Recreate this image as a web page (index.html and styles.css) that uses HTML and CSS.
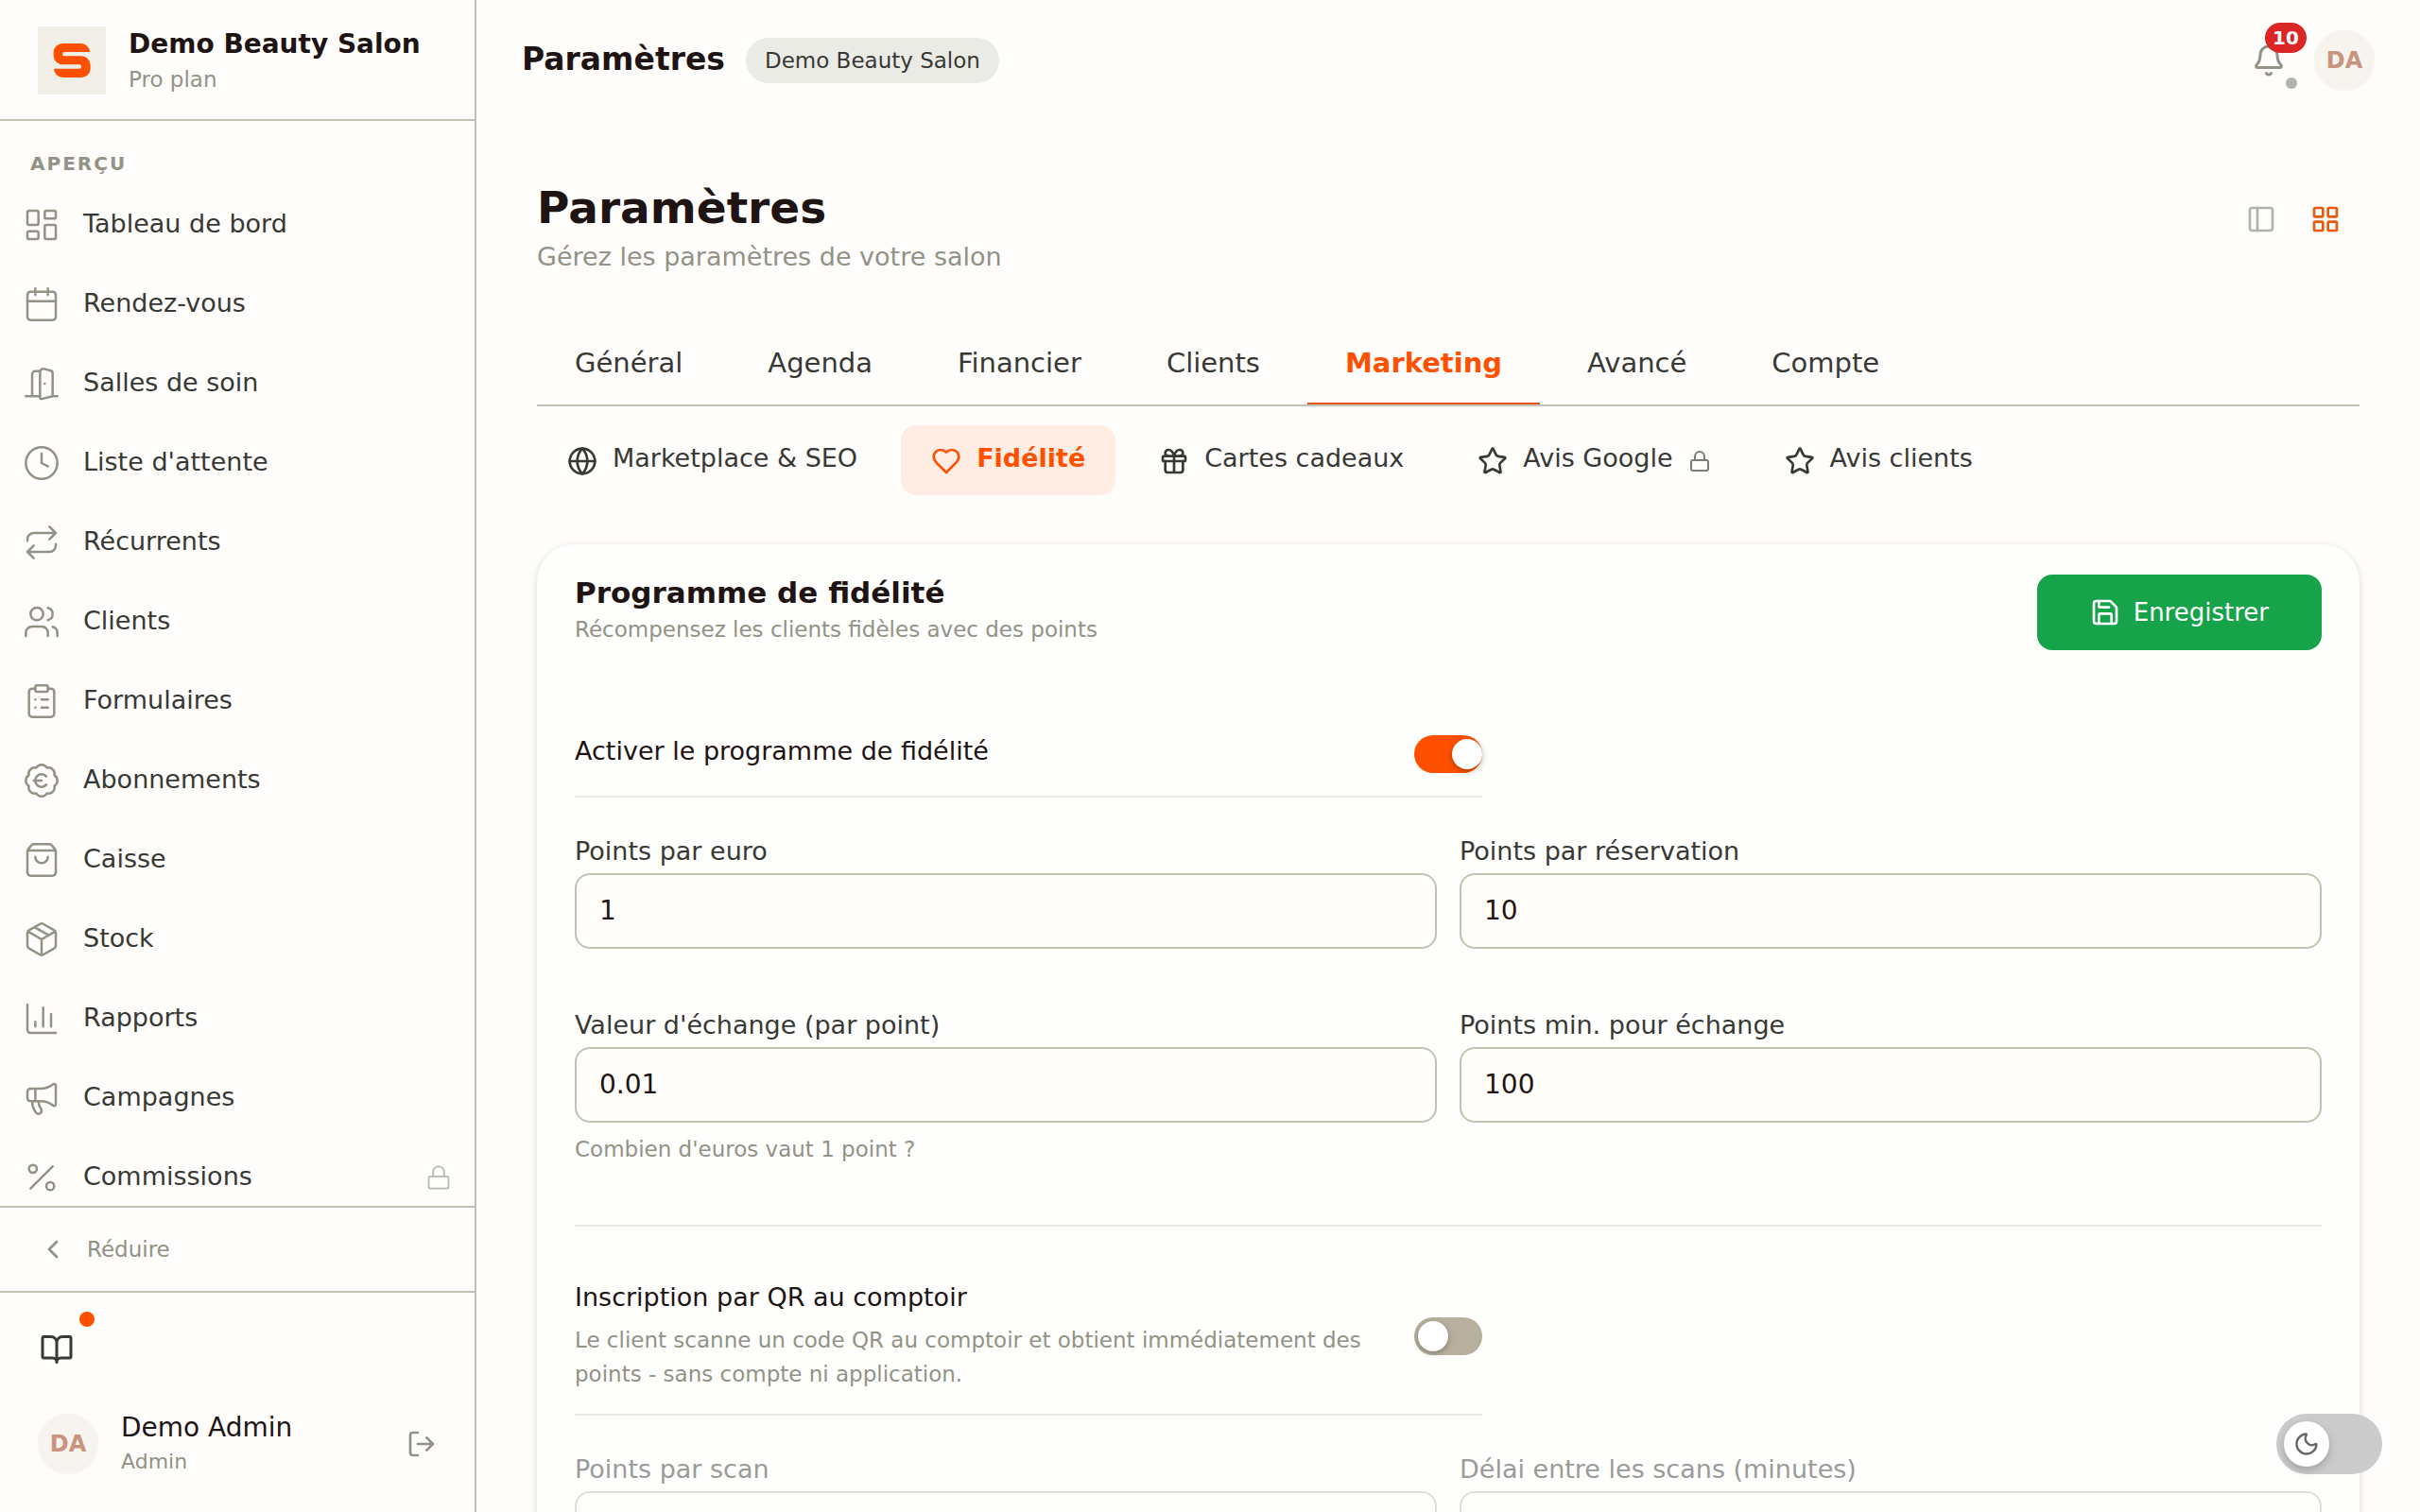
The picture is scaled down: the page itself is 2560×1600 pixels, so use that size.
FILE: index.html
```html
<!DOCTYPE html>
<html lang="fr">
<head>
    <meta charset="UTF-8">
    <meta name="viewport" content="width=device-width, initial-scale=1.0">
    <title>Paramètres - Demo Beauty Salon</title>
    <link rel="stylesheet" href="styles.css">
</head>
<body>
    <!-- Icon sprite -->
    <svg class="sprite" aria-hidden="true">
        <symbol id="i-dashboard" viewBox="0 0 24 24"><rect width="7" height="9" x="3" y="3" rx="1"/><rect width="7" height="5" x="14" y="3" rx="1"/><rect width="7" height="9" x="14" y="12" rx="1"/><rect width="7" height="5" x="3" y="16" rx="1"/></symbol>
        <symbol id="i-calendar" viewBox="0 0 24 24"><path d="M8 2v4M16 2v4M3 10h18"/><rect width="18" height="18" x="3" y="4" rx="2"/></symbol>
        <symbol id="i-door" viewBox="0 0 24 24"><path d="M11 20H2M11 4.562v16.157a1 1 0 0 0 1.242.97L19 20V5.562a2 2 0 0 0-1.515-1.94l-4-1A2 2 0 0 0 11 4.561zM11 4H8a2 2 0 0 0-2 2v14M14 12h.01M22 20h-3"/></symbol>
        <symbol id="i-clock" viewBox="0 0 24 24"><circle cx="12" cy="12" r="10"/><path d="M12 6v6l4 2"/></symbol>
        <symbol id="i-repeat" viewBox="0 0 24 24"><path d="m17 2 4 4-4 4M3 11v-1a4 4 0 0 1 4-4h14M7 22l-4-4 4-4M21 13v1a4 4 0 0 1-4 4H3"/></symbol>
        <symbol id="i-users" viewBox="0 0 24 24"><path d="M16 21v-2a4 4 0 0 0-4-4H6a4 4 0 0 0-4 4v2M16 3.128a4 4 0 0 1 0 7.744M22 21v-2a4 4 0 0 0-3-3.87"/><circle cx="9" cy="7" r="4"/></symbol>
        <symbol id="i-clipboard" viewBox="0 0 24 24"><rect width="8" height="4" x="8" y="2" rx="1"/><path d="M16 4h2a2 2 0 0 1 2 2v14a2 2 0 0 1-2 2H6a2 2 0 0 1-2-2V6a2 2 0 0 1 2-2h2M12 11h4M12 16h4M8 11h.01M8 16h.01"/></symbol>
        <symbol id="i-badge-euro" viewBox="0 0 24 24"><path d="M3.85 8.62a4 4 0 0 1 4.78-4.77 4 4 0 0 1 6.74 0 4 4 0 0 1 4.78 4.78 4 4 0 0 1 0 6.74 4 4 0 0 1-4.77 4.78 4 4 0 0 1-6.75 0 4 4 0 0 1-4.78-4.77 4 4 0 0 1 0-6.76ZM7 12h5M15 9.4a4 4 0 1 0 0 5.2"/></symbol>
        <symbol id="i-bag" viewBox="0 0 24 24"><path d="M16 10a4 4 0 0 1-8 0M3.103 6.034h17.794M3.4 5.467a2 2 0 0 0-.4 1.2V20a2 2 0 0 0 2 2h14a2 2 0 0 0 2-2V6.667a2 2 0 0 0-.4-1.2l-2-2.667A2 2 0 0 0 17 2H7a2 2 0 0 0-1.6.8z"/></symbol>
        <symbol id="i-package" viewBox="0 0 24 24"><path d="M11 21.73a2 2 0 0 0 2 0l7-4A2 2 0 0 0 21 16V8a2 2 0 0 0-1-1.73l-7-4a2 2 0 0 0-2 0l-7 4A2 2 0 0 0 3 8v8a2 2 0 0 0 1 1.73zM12 22V12M3.29 7 12 12l8.71-5M7.5 4.27l9 5.15"/></symbol>
        <symbol id="i-chart" viewBox="0 0 24 24"><path d="M3 3v16a2 2 0 0 0 2 2h16M18 17V9M13 17V5M8 17v-3"/></symbol>
        <symbol id="i-megaphone" viewBox="0 0 24 24"><path d="M11 6a13 13 0 0 0 8.4-2.8A1 1 0 0 1 21 4v12a1 1 0 0 1-1.6.8A13 13 0 0 0 11 14H5a2 2 0 0 1-2-2V8a2 2 0 0 1 2-2zM6 14a12 12 0 0 0 2.4 7.2 2 2 0 0 0 3.2-2.4A8 8 0 0 1 10 14M8 6v8"/></symbol>
        <symbol id="i-percent" viewBox="0 0 24 24"><path d="M19 5 5 19"/><circle cx="6.5" cy="6.5" r="2.5"/><circle cx="17.5" cy="17.5" r="2.5"/></symbol>
        <symbol id="i-lock" viewBox="0 0 24 24"><rect width="18" height="11" x="3" y="11" rx="2"/><path d="M7 11V7a5 5 0 0 1 10 0v4"/></symbol>
        <symbol id="i-chevron-left" viewBox="0 0 24 24"><path d="m15 18-6-6 6-6"/></symbol>
        <symbol id="i-book" viewBox="0 0 24 24"><path d="M12 7v14M3 18a1 1 0 0 1-1-1V4a1 1 0 0 1 1-1h5a4 4 0 0 1 4 4 4 4 0 0 1 4-4h5a1 1 0 0 1 1 1v13a1 1 0 0 1-1 1h-6a3 3 0 0 0-3 3 3 3 0 0 0-3-3z"/></symbol>
        <symbol id="i-logout" viewBox="0 0 24 24"><path d="m16 17 5-5-5-5M21 12H9M9 21H5a2 2 0 0 1-2-2V5a2 2 0 0 1 2-2h4"/></symbol>
        <symbol id="i-bell" viewBox="0 0 24 24"><path d="M10.268 21a2 2 0 0 0 3.464 0M3.262 15.326A1 1 0 0 0 4 17h16a1 1 0 0 0 .74-1.673C19.41 13.956 18 12.499 18 8A6 6 0 0 0 6 8c0 4.499-1.411 5.956-2.738 7.326"/></symbol>
        <symbol id="i-panel" viewBox="0 0 24 24"><rect width="18" height="18" x="3" y="3" rx="2"/><path d="M9 3v18"/></symbol>
        <symbol id="i-grid" viewBox="0 0 24 24"><rect width="7" height="7" x="3" y="3" rx="1"/><rect width="7" height="7" x="14" y="3" rx="1"/><rect width="7" height="7" x="14" y="14" rx="1"/><rect width="7" height="7" x="3" y="14" rx="1"/></symbol>
        <symbol id="i-globe" viewBox="0 0 24 24"><circle cx="12" cy="12" r="10"/><path d="M12 2a14.5 14.5 0 0 0 0 20 14.5 14.5 0 0 0 0-20M2 12h20"/></symbol>
        <symbol id="i-heart" viewBox="0 0 24 24"><path d="M19 14c1.49-1.46 3-3.21 3-5.5A5.5 5.5 0 0 0 16.5 3c-1.76 0-3 .5-4.5 2-1.5-1.5-2.74-2-4.5-2A5.5 5.5 0 0 0 2 8.5c0 2.3 1.5 4.05 3 5.5l7 7Z"/></symbol>
        <symbol id="i-gift" viewBox="0 0 24 24"><rect x="3" y="8" width="18" height="4" rx="1"/><path d="M12 8v13M19 12v7a2 2 0 0 1-2 2H7a2 2 0 0 1-2-2v-7M7.5 8a2.5 2.5 0 0 1 0-5A4.8 8 0 0 1 12 8a4.8 8 0 0 1 4.5-5 2.5 2.5 0 0 1 0 5"/></symbol>
        <symbol id="i-star" viewBox="0 0 24 24"><path d="M11.525 2.295a.53.53 0 0 1 .95 0l2.31 4.679a2.123 2.123 0 0 0 1.595 1.16l5.166.756a.53.53 0 0 1 .294.904l-3.736 3.638a2.123 2.123 0 0 0-.611 1.878l.882 5.14a.53.53 0 0 1-.771.56l-4.618-2.428a2.122 2.122 0 0 0-1.973 0L6.396 21.01a.53.53 0 0 1-.77-.56l.881-5.139a2.122 2.122 0 0 0-.611-1.879L2.16 9.795a.53.53 0 0 1 .294-.906l5.165-.755a2.122 2.122 0 0 0 1.597-1.16z"/></symbol>
        <symbol id="i-save" viewBox="0 0 24 24"><path d="M15.2 3a2 2 0 0 1 1.4.6l3.8 3.8a2 2 0 0 1 .6 1.4V19a2 2 0 0 1-2 2H5a2 2 0 0 1-2-2V5a2 2 0 0 1 2-2zM17 21v-7a1 1 0 0 0-1-1H8a1 1 0 0 0-1 1v7M7 3v4a1 1 0 0 0 1 1h7"/></symbol>
        <symbol id="i-moon" viewBox="0 0 24 24"><path d="M20.985 12.486a9 9 0 1 1-9.473-9.472c.405-.022.617.46.402.803a6 6 0 0 0 8.268 8.268c.344-.215.825-.004.803.401"/></symbol>
    </svg>

    <div class="app">
        <aside class="sidebar">
            <div class="brand">
                <svg class="brand-logo" viewBox="0 0 216 216" aria-hidden="true"><path d="M165 81H85a6.5 6.5 0 0 0 0 13H138a29 29 0 0 1 29 29V133a29 29 0 0 1-29 29H80a29 28 0 0 1-29-28H132a6 6 0 0 0 6-6 6 7 0 0 0-6-7H79a29 28 0 0 1-29-28V82a29 28 0 0 1 29-28H137a28 27 0 0 1 28 27z"/></svg>
                <div class="brand-text">
                    <div class="brand-name">Demo Beauty Salon</div>
                    <div class="brand-plan">Pro plan</div>
                </div>
            </div>

            <nav class="nav">
                <div class="nav-label">APERÇU</div>
                <a class="nav-item" href="#"><svg class="icon nav-icon"><use href="#i-dashboard"/></svg>Tableau de bord</a>
                <a class="nav-item" href="#"><svg class="icon nav-icon"><use href="#i-calendar"/></svg>Rendez-vous</a>
                <a class="nav-item" href="#"><svg class="icon nav-icon"><use href="#i-door"/></svg>Salles de soin</a>
                <a class="nav-item" href="#"><svg class="icon nav-icon"><use href="#i-clock"/></svg>Liste d'attente</a>
                <a class="nav-item" href="#"><svg class="icon nav-icon"><use href="#i-repeat"/></svg>Récurrents</a>
                <a class="nav-item" href="#"><svg class="icon nav-icon"><use href="#i-users"/></svg>Clients</a>
                <a class="nav-item" href="#"><svg class="icon nav-icon"><use href="#i-clipboard"/></svg>Formulaires</a>
                <a class="nav-item" href="#"><svg class="icon nav-icon"><use href="#i-badge-euro"/></svg>Abonnements</a>
                <a class="nav-item" href="#"><svg class="icon nav-icon"><use href="#i-bag"/></svg>Caisse</a>
                <a class="nav-item" href="#"><svg class="icon nav-icon"><use href="#i-package"/></svg>Stock</a>
                <a class="nav-item" href="#"><svg class="icon nav-icon"><use href="#i-chart"/></svg>Rapports</a>
                <a class="nav-item" href="#"><svg class="icon nav-icon"><use href="#i-megaphone"/></svg>Campagnes</a>
                <a class="nav-item" href="#"><svg class="icon nav-icon"><use href="#i-percent"/></svg>Commissions<svg class="icon nav-lock"><use href="#i-lock"/></svg></a>
            </nav>

            <button class="collapse" type="button"><svg class="icon icon-md"><use href="#i-chevron-left"/></svg>Réduire</button>

            <div class="sidebar-footer">
                <button class="guide-button" type="button" aria-label="Guide"><svg class="icon icon-lg"><use href="#i-book"/></svg><span class="guide-dot"></span></button>
                <div class="user">
                    <div class="avatar">DA</div>
                    <div class="user-text">
                        <div class="user-name">Demo Admin</div>
                        <div class="user-role">Admin</div>
                    </div>
                    <button class="logout" type="button" aria-label="Se déconnecter"><svg class="icon icon-md"><use href="#i-logout"/></svg></button>
                </div>
            </div>
        </aside>

        <main class="main">
            <header class="topbar">
                <div class="topbar-title">Paramètres</div>
                <span class="salon-pill">Demo Beauty Salon</span>
                <div class="topbar-actions">
                    <button class="bell" type="button" aria-label="Notifications">
                        <svg class="icon icon-lg"><use href="#i-bell"/></svg>
                        <span class="bell-badge">10</span>
                        <span class="bell-status"></span>
                    </button>
                    <div class="avatar">DA</div>
                </div>
            </header>

            <div class="content">
                <div class="page-head">
                    <div>
                        <h1>Paramètres</h1>
                        <p class="page-subtitle">Gérez les paramètres de votre salon</p>
                    </div>
                    <div class="view-toggle">
                        <button class="view-button" type="button" aria-label="Vue latérale"><svg class="icon icon-md"><use href="#i-panel"/></svg></button>
                        <button class="view-button active" type="button" aria-label="Vue grille"><svg class="icon icon-md"><use href="#i-grid"/></svg></button>
                    </div>
                </div>

                <nav class="tabs">
                    <a class="tab" href="#">Général</a>
                    <a class="tab" href="#">Agenda</a>
                    <a class="tab" href="#">Financier</a>
                    <a class="tab" href="#">Clients</a>
                    <a class="tab active" href="#">Marketing</a>
                    <a class="tab" href="#">Avancé</a>
                    <a class="tab" href="#">Compte</a>
                </nav>

                <nav class="subtabs">
                    <a class="subtab" href="#"><svg class="icon icon-md"><use href="#i-globe"/></svg><span>Marketplace &amp; SEO</span></a>
                    <a class="subtab active" href="#"><svg class="icon icon-md"><use href="#i-heart"/></svg><span>Fidélité</span></a>
                    <a class="subtab" href="#"><svg class="icon icon-md"><use href="#i-gift"/></svg><span>Cartes cadeaux</span></a>
                    <a class="subtab" href="#"><svg class="icon icon-md"><use href="#i-star"/></svg><span>Avis Google</span><svg class="icon subtab-lock"><use href="#i-lock"/></svg></a>
                    <a class="subtab" href="#"><svg class="icon icon-md"><use href="#i-star"/></svg><span>Avis clients</span></a>
                </nav>

                <section class="card">
                    <div class="card-head">
                        <div>
                            <h2>Programme de fidélité</h2>
                            <p class="card-subtitle">Récompensez les clients fidèles avec des points</p>
                        </div>
                        <button class="save-button" type="button"><svg class="icon icon-md"><use href="#i-save"/></svg>Enregistrer</button>
                    </div>

                    <div class="switch-row">
                        <label class="switch-text" for="loyalty-enabled"><span class="switch-title">Activer le programme de fidélité</span></label>
                        <input class="switch" type="checkbox" id="loyalty-enabled" checked>
                    </div>

                    <div class="fields">
                        <div class="field">
                            <label for="points-euro">Points par euro</label>
                            <input type="number" id="points-euro" value="1">
                        </div>
                        <div class="field">
                            <label for="points-booking">Points par réservation</label>
                            <input type="number" id="points-booking" value="10">
                        </div>
                        <div class="field">
                            <label for="point-value">Valeur d'échange (par point)</label>
                            <input type="number" id="point-value" step="0.01" value="0.01">
                            <p class="hint">Combien d'euros vaut 1 point ?</p>
                        </div>
                        <div class="field">
                            <label for="points-min">Points min. pour échange</label>
                            <input type="number" id="points-min" value="100">
                        </div>
                    </div>

                    <hr class="divider">

                    <div class="switch-row">
                        <label class="switch-text" for="qr-enabled">
                            <span class="switch-title">Inscription par QR au comptoir</span>
                            <span class="switch-desc">Le client scanne un code QR au comptoir et obtient immédiatement des points - sans compte ni application.</span>
                        </label>
                        <input class="switch" type="checkbox" id="qr-enabled">
                    </div>

                    <div class="fields disabled">
                        <div class="field">
                            <label for="points-scan">Points par scan</label>
                            <input type="number" id="points-scan" value="10" disabled>
                        </div>
                        <div class="field">
                            <label for="scan-delay">Délai entre les scans (minutes)</label>
                            <input type="number" id="scan-delay" value="60" disabled>
                        </div>
                    </div>
                </section>
            </div>
        </main>
    </div>

    <button class="theme-toggle" type="button" aria-label="Mode sombre"><span class="theme-knob"><svg class="icon"><use href="#i-moon"/></svg></span></button>
</body>
</html>
```
FILE: styles.css
```css
:root {
    --bg: #fefdfb;
    --border: #c2c2b2;
    --line: #e8e8e4;
    --ink: #1f1414;
    --text: #383835;
    --muted: #929286;
    --accent: #ff5000;
}

* {
    box-sizing: border-box;
}

body {
    margin: 0;
    background: var(--bg);
    color: var(--text);
    font-family: "DejaVu Sans", sans-serif;
    font-size: 27px;
}

h1,
h2,
p {
    margin: 0;
}

a {
    color: inherit;
    text-decoration: none;
}

button {
    padding: 0;
    border: none;
    background: none;
    color: inherit;
    font-family: inherit;
    font-size: 27px;
    cursor: pointer;
}

/* Icons */
.sprite {
    display: none;
}

.icon {
    flex: none;
    fill: none;
    stroke: currentColor;
    stroke-width: 2;
    stroke-linecap: round;
    stroke-linejoin: round;
}

.icon-md {
    width: 32px;
    height: 32px;
}

.icon-lg {
    width: 36px;
    height: 36px;
}

.app {
    display: flex;
    height: 100vh;
}

/* Sidebar */
.sidebar {
    display: flex;
    flex-direction: column;
    flex: none;
    width: 504px;
    border-right: 2px solid var(--border);
}

.brand {
    display: flex;
    align-items: center;
    gap: 24px;
    height: 128px;
    padding: 2px 40px 0;
    border-bottom: 2px solid var(--border);
}

.brand-logo {
    width: 72px;
    height: 72px;
    background: #f0eee7;
    fill: var(--accent);
}

.brand-name {
    padding-top: 2px;
    color: var(--ink);
    font-size: 28px;
    font-weight: bold;
    line-height: 38px;
    white-space: nowrap;
}

.brand-plan {
    color: var(--muted);
    font-size: 23px;
    line-height: 36px;
}

.nav {
    flex: 1;
    min-height: 0;
    padding: 24px 0;
    overflow-y: auto;
    scrollbar-width: none;
}

.nav-label {
    margin-bottom: 2px;
    padding: 0 32px;
    color: var(--muted);
    font-size: 20px;
    font-weight: bold;
    letter-spacing: 2px;
    line-height: 42px;
}

.nav-item {
    display: flex;
    align-items: center;
    gap: 24px;
    height: 80px;
    margin-bottom: 4px;
    padding: 0 24px;
}

.nav-icon {
    width: 40px;
    height: 40px;
    margin-top: 4px;
    color: var(--muted);
    stroke-width: 1.5;
}

.nav-lock {
    width: 28px;
    height: 28px;
    margin-top: 4px;
    margin-left: auto;
    color: #b8b8b2;
    stroke-width: 1.5;
}

.collapse {
    display: flex;
    align-items: center;
    gap: 20px;
    height: 90px;
    padding: 0 40px;
    border-top: 2px solid var(--border);
    color: var(--muted);
    font-size: 23px;
}

.sidebar-footer {
    padding: 24px;
    border-top: 2px solid var(--border);
}

.guide-button {
    position: relative;
    display: flex;
    align-items: center;
    justify-content: center;
    width: 72px;
    height: 72px;
}

.guide-dot {
    position: absolute;
    top: -4px;
    right: -4px;
    width: 16px;
    height: 16px;
    border-radius: 50%;
    background: var(--accent);
}

.user {
    display: flex;
    align-items: center;
    gap: 24px;
    height: 96px;
    margin-top: 16px;
    padding: 0 16px;
}

.avatar {
    display: flex;
    align-items: center;
    justify-content: center;
    width: 64px;
    height: 64px;
    border-radius: 50%;
    background: #f7f3ef;
    color: #c8937f;
    font-size: 24px;
    font-weight: bold;
}

.user-text {
    padding-top: 2px;
}

.user-name {
    color: var(--ink);
    font-size: 28px;
    line-height: 36px;
}

.user-role {
    color: var(--muted);
    font-size: 22px;
    line-height: 36px;
}

.logout {
    display: flex;
    margin-left: auto;
    color: var(--muted);
}

/* Main column */
.main {
    flex: 1;
    min-width: 0;
    overflow-y: auto;
    scrollbar-width: none;
}

.topbar {
    display: flex;
    align-items: center;
    gap: 22px;
    height: 128px;
    padding: 0 48px;
}

.topbar-title {
    padding-bottom: 4px;
    color: var(--ink);
    font-size: 33px;
    font-weight: bold;
}

.salon-pill {
    padding: 0 20px;
    border-radius: 24px;
    background: #ebebe6;
    font-size: 23px;
    line-height: 48px;
}

.topbar-actions {
    display: flex;
    align-items: center;
    gap: 12px;
    margin-left: auto;
}

.bell {
    position: relative;
    display: flex;
    align-items: center;
    justify-content: center;
    width: 72px;
    height: 72px;
    color: var(--muted);
}

.bell-badge {
    position: absolute;
    top: -4px;
    right: -4px;
    width: 44px;
    border-radius: 16px;
    background: #dc2626;
    color: #fff;
    font-size: 20px;
    font-weight: bold;
    line-height: 32px;
    text-align: center;
}

.bell-status {
    position: absolute;
    right: 6px;
    bottom: 6px;
    width: 12px;
    height: 12px;
    border-radius: 50%;
    background: #b3b3ae;
}

.content {
    padding: 64px;
}

.page-head {
    display: flex;
    align-items: flex-start;
    justify-content: space-between;
}

h1 {
    color: var(--ink);
    font-size: 47px;
    line-height: 56px;
}

.page-subtitle {
    margin-top: 4px;
    color: var(--muted);
    line-height: 40px;
}

.view-toggle {
    display: flex;
    gap: 4px;
    padding: 8px 4px;
}

.view-button {
    display: flex;
    align-items: center;
    justify-content: center;
    width: 64px;
    height: 64px;
    color: #b3b3ae;
}

.view-button.active {
    color: #ea580c;
}

/* Tabs */
.tabs {
    display: flex;
    gap: 10px;
    margin-top: 48px;
    border-bottom: 2px solid var(--border);
}

.tab {
    padding: 24px 40px 22px;
    border-bottom: 2px solid transparent;
    font-size: 29px;
    line-height: 40px;
}

.tab.active {
    border-color: #e2561c;
    color: var(--accent);
    font-weight: bold;
}

.subtabs {
    display: flex;
    gap: 14px;
    margin-top: 20px;
}

.subtab {
    display: flex;
    align-items: center;
    gap: 16px;
    height: 74px;
    padding: 0 32px;
    border-radius: 16px;
}

.subtab span {
    padding-bottom: 6px;
}

.subtab.active {
    background: #ffece3;
    color: var(--accent);
    font-weight: bold;
}

.subtab .icon {
    margin-top: 2px;
}

.subtab .subtab-lock {
    width: 24px;
    height: 24px;
    color: #7c7c79;
}

/* Card */
.card {
    margin-top: 52px;
    padding: 32px 40px 64px;
    border-radius: 40px;
    background: #fefefd;
    box-shadow: 0 2px 8px rgba(0, 0, 0, 0.14);
}

.card-head {
    display: flex;
    align-items: flex-start;
    justify-content: space-between;
    margin-bottom: 66px;
}

h2 {
    color: var(--ink);
    font-size: 31px;
    line-height: 38px;
}

.card-subtitle {
    margin-top: 4px;
    color: var(--muted);
    font-size: 23px;
    line-height: 32px;
}

.save-button {
    display: flex;
    align-items: center;
    gap: 14px;
    height: 80px;
    padding: 0 56px;
    border-radius: 16px;
    background: #16a34a;
    color: #fff;
    font-size: 26px;
}

.switch-row {
    display: flex;
    align-items: center;
    justify-content: space-between;
    gap: 32px;
    max-width: 960px;
    padding: 24px 0;
    border-bottom: 2px solid var(--line);
}

.switch-title {
    display: block;
    margin-bottom: 6px;
    color: var(--ink);
    line-height: 34px;
}

.switch-desc {
    display: block;
    margin-top: 10px;
    color: var(--muted);
    font-size: 23px;
    line-height: 36px;
}

.switch {
    flex: none;
    width: 72px;
    height: 40px;
    margin: 0;
    padding: 4px;
    border-radius: 20px;
    background: #b8b09f;
    appearance: none;
    cursor: pointer;
}

.switch::before {
    content: "";
    display: block;
    width: 32px;
    height: 32px;
    border-radius: 50%;
    background: #fff;
    box-shadow: 0 2px 6px rgba(0, 0, 0, 0.3);
}

.switch:checked {
    background: var(--accent);
}

.switch:checked::before {
    margin-left: 36px;
}

.fields {
    display: grid;
    grid-template-columns: 1fr 1fr;
    gap: 60px 24px;
    margin-top: 36px;
}

.fields.disabled {
    opacity: 0.5;
}

.field label {
    display: block;
    margin-bottom: 2px;
    line-height: 42px;
}

.field input {
    display: block;
    width: 100%;
    height: 80px;
    padding: 0 24px 2px;
    border: 2px solid var(--border);
    border-radius: 16px;
    background: #fffefb;
    color: var(--ink);
    font-family: inherit;
    font-size: 28px;
    appearance: textfield;
}

.hint {
    margin-top: 12px;
    color: var(--muted);
    font-size: 23px;
    line-height: 32px;
}

.divider {
    margin: 64px 0 34px;
    border: none;
    border-top: 2px solid var(--line);
}

/* Dark mode toggle */
.theme-toggle {
    position: fixed;
    right: 40px;
    bottom: 40px;
    width: 112px;
    height: 64px;
    padding: 8px;
    border-radius: 32px;
    background: #cbcbcb;
}

.theme-knob {
    display: flex;
    align-items: center;
    justify-content: center;
    width: 48px;
    height: 48px;
    border-radius: 50%;
    background: #fff;
    box-shadow: 0 4px 8px rgba(0, 0, 0, 0.2);
    color: #666;
}

.theme-knob .icon {
    width: 28px;
    height: 28px;
}
```
